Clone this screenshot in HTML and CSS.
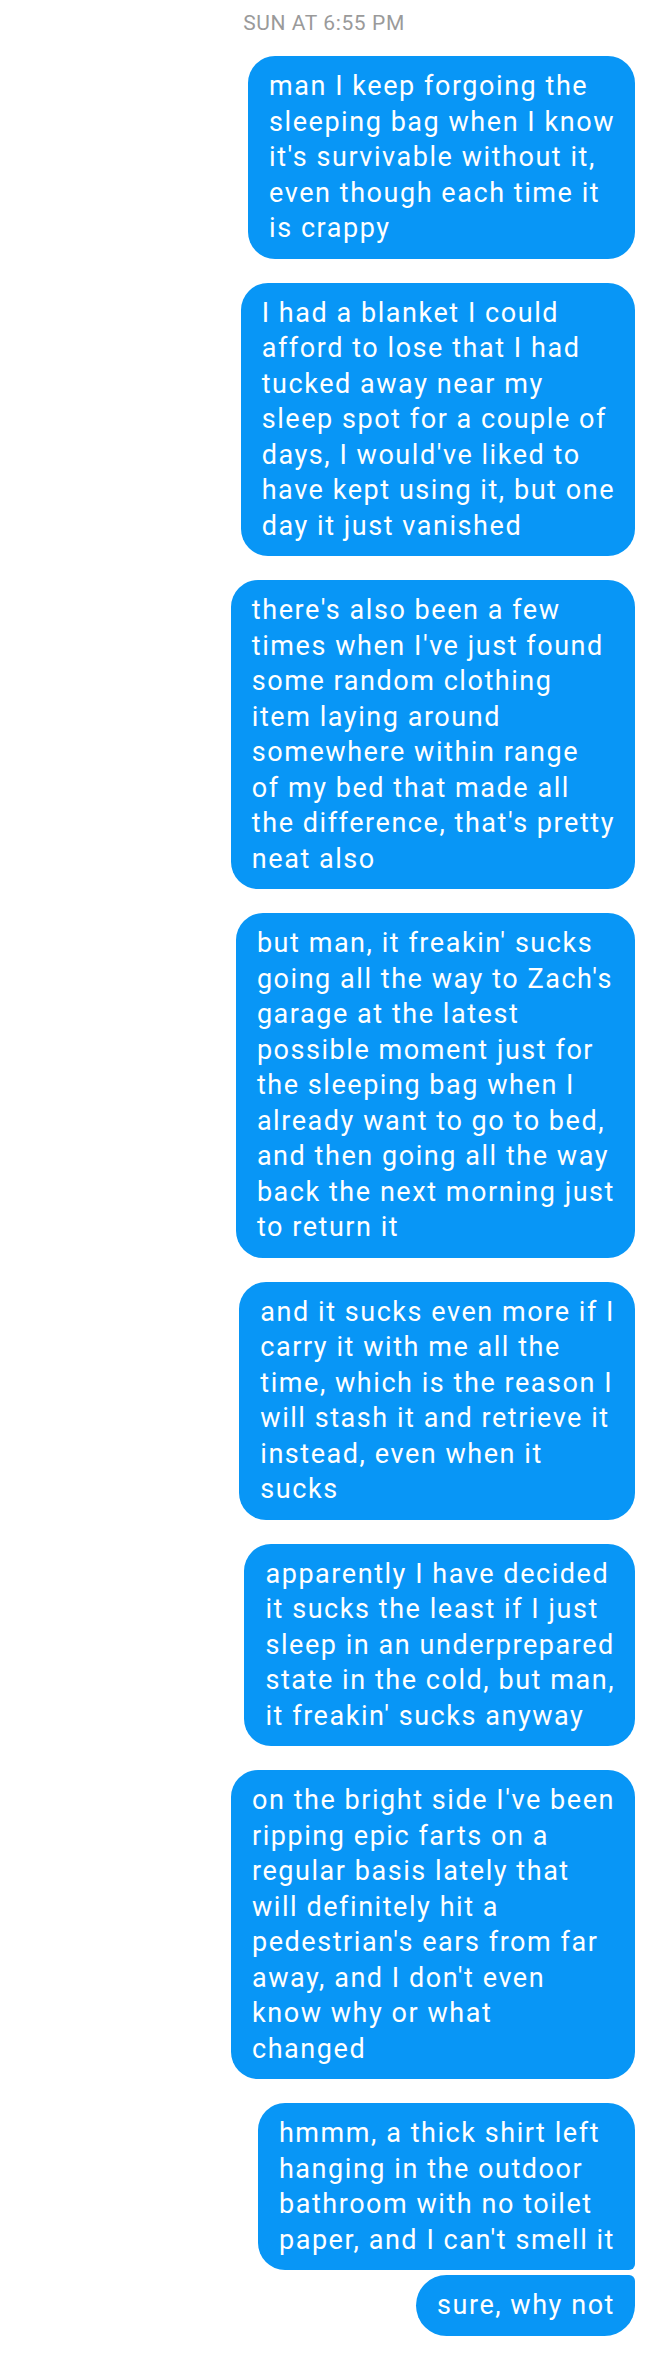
FILE: index.html
```html
<!DOCTYPE html>
<html>
<head>
<meta charset="utf-8">
<link rel="stylesheet" href="styles.css">
</head>
<body>
<div class="thread">
  <div class="stamp">SUN AT 6:55 PM</div>
  <div class="msg">man I keep forgoing the<br>sleeping bag when I know<br>it's survivable without it,<br>even though each time it<br>is crappy</div>
  <div class="msg">I had a blanket I could<br>afford to lose that I had<br>tucked away near my<br>sleep spot for a couple of<br>days, I would've liked to<br>have kept using it, but one<br>day it just vanished</div>
  <div class="msg">there's also been a few<br>times when I've just found<br>some random clothing<br>item laying around<br>somewhere within range<br>of my bed that made all<br>the difference, that's pretty<br>neat also</div>
  <div class="msg">but man, it freakin' sucks<br>going all the way to Zach's<br>garage at the latest<br>possible moment just for<br>the sleeping bag when I<br>already want to go to bed,<br>and then going all the way<br>back the next morning just<br>to return it</div>
  <div class="msg">and it sucks even more if I<br>carry it with me all the<br>time, which is the reason I<br>will stash it and retrieve it<br>instead, even when it<br>sucks</div>
  <div class="msg">apparently I have decided<br>it sucks the least if I just<br>sleep in an underprepared<br>state in the cold, but man,<br>it freakin' sucks anyway</div>
  <div class="msg">on the bright side I've been<br>ripping epic farts on a<br>regular basis lately that<br>will definitely hit a<br>pedestrian's ears from far<br>away, and I don't even<br>know why or what<br>changed</div>
  <div class="msg first">hmmm, a thick shirt left<br>hanging in the outdoor<br>bathroom with no toilet<br>paper, and I can't smell it</div>
  <div class="msg last">sure, why not</div>
</div>
</body>
</html>
```

FILE: styles.css
```css
html, body {
  margin: 0;
  padding: 0;
  background: #ffffff;
}
body {
  font-family: Roboto, "Noto Sans", sans-serif;
}
.thread {
  display: flex;
  flex-direction: column;
  align-items: flex-end;
  padding: 0 13px 14px 0;
}
.stamp {
  align-self: center;
  padding-left: 13px;
  color: #9a9a9a;
  font-size: 21px;
  letter-spacing: 0.6px;
  line-height: 24px;
  margin-top: 11px;
  margin-bottom: 21px;
}
.msg {
  background: #0896f6;
  color: #ffffff;
  font-size: 27px;
  letter-spacing: 1.55px;
  line-height: 35.5px;
  padding: 13px 20px 12px 21px;
  border-radius: 27px;
  margin-bottom: 24px;
  white-space: nowrap;
}
.msg.first {
  border-bottom-right-radius: 6px;
  margin-bottom: 5px;
}
.msg.last {
  border-top-right-radius: 6px;
  border-bottom-right-radius: 31px;
  border-top-left-radius: 31px;
  border-bottom-left-radius: 31px;
  margin-bottom: 0;
}
```
